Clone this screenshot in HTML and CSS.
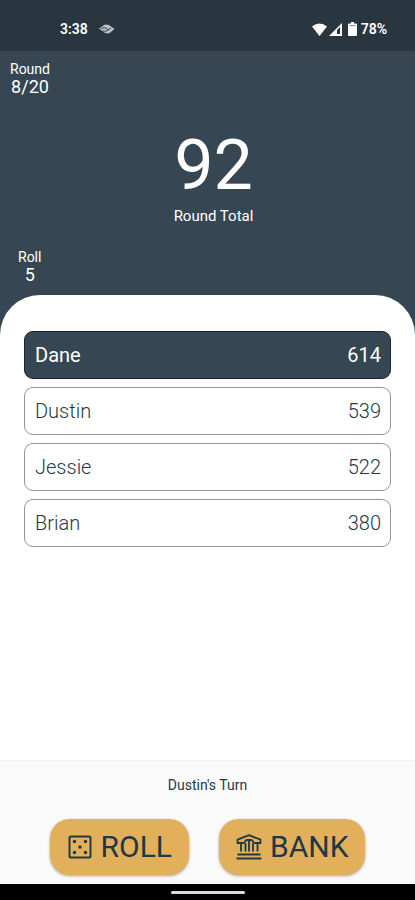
FILE: index.html
```html
<!DOCTYPE html>
<html lang="en">
<head>
<meta charset="utf-8">
<meta name="viewport" content="width=device-width, initial-scale=1">
<title>Bank</title>
<link rel="stylesheet" href="styles.css">
</head>
<body>
<div class="status-bar">
  <div class="status-group">
    <time>3:38</time>
    <svg class="cast-icon" width="16" height="10" viewBox="0 0 16 10" aria-hidden="true">
      <path d="M0 4.500L6 .500L10 1L15.500 5L10 9.500L6 9Z" fill="#b8c1c5"/>
      <path d="M2 4.500C6 3 8 4 9 6L12 4M4 7C6 7.500 8 7 9 6" fill="none" stroke="#2a363f" stroke-width="1"/>
    </svg>
  </div>
  <div class="status-group status-icons">
    <svg width="15" height="13" viewBox="0 0 15 13" aria-hidden="true"><path d="M0 3.500Q7.500-2.500 15 3.500L7.500 13Z" fill="#fff"/></svg>
    <svg width="13" height="13" viewBox="0 0 13 13" aria-hidden="true"><path d="M0 13L13 0V13Z" fill="#fff"/><path d="M8 7L11 4V11H8Z" fill="#2a363f"/></svg>
    <svg class="battery-icon" width="9" height="14" viewBox="0 0 9 14" aria-hidden="true"><path d="M3 0H6V1.500H8Q9 1.500 9 2.500V13Q9 14 8 14H1Q0 14 0 13V2.500Q0 1.500 1 1.500H3Z" fill="#fff"/><path d="M1.500 3.500H7.500" stroke="#7d878d"/></svg>
    <span>78%</span>
  </div>
</div>
<header class="summary">
  <div class="stat"><span class="label">Round</span><span class="stat-value">8/20</span></div>
  <div class="total"><span class="total-value">92</span><span class="total-label">Round Total</span></div>
  <div class="stat stat-roll"><span class="label">Roll</span><span class="stat-value">5</span></div>
</header>
<main class="sheet-wrap">
  <ol class="players">
    <li class="player active"><span>Dane</span><span>614</span></li>
    <li class="player"><span>Dustin</span><span>539</span></li>
    <li class="player"><span>Jessie</span><span>522</span></li>
    <li class="player"><span>Brian</span><span>380</span></li>
  </ol>
</main>
<footer class="turn">
  <p class="turn-name">Dustin's Turn</p>
  <div class="actions">
    <button class="action" type="button">
      <svg width="26" height="26" viewBox="-1 -1 26 26" aria-hidden="true">
        <rect x="1.500" y="1.500" width="21" height="21" rx="1.500" fill="none" stroke="currentColor" stroke-width="2"/>
        <g fill="currentColor"><circle cx="6.500" cy="6.500" r="1.700"/><circle cx="17.500" cy="6.500" r="1.700"/><circle cx="12" cy="12" r="1.700"/><circle cx="6.500" cy="17.500" r="1.700"/><circle cx="17.500" cy="17.500" r="1.700"/></g>
      </svg>
      <span>ROLL</span>
    </button>
    <button class="action" type="button">
      <svg width="26" height="26" viewBox="0 0 26 26" aria-hidden="true">
        <path d="M1.500 9V5.700L13 1.200L24.500 5.700V9H19Q17.500 9 17 7.500L15.500 6H10.500L9 7.500Q8.500 9 7 9Z" fill="none" stroke="currentColor" stroke-width="1.800" stroke-linejoin="round"/>
        <path d="M5 9V17.500M9.500 9V17.500M13 6V17.500M17 9V17.500M21.500 9V17.500" stroke="currentColor" stroke-width="1.800"/>
        <path d="M1.500 20.500H24.500M.5 24.500H25.500" stroke="currentColor" stroke-width="2"/>
      </svg>
      <span>BANK</span>
    </button>
  </div>
</footer>
<div class="nav-bar"><span class="nav-handle"></span></div>
</body>
</html>
```
FILE: styles.css
```css
* { box-sizing: border-box; }

body {
  margin: 0;
  min-height: 100vh;
  display: flex;
  flex-direction: column;
  font-family: Roboto, "Liberation Sans", sans-serif;
  color: #263847;
  background: #fff;
}

.status-bar {
  display: flex;
  justify-content: space-between;
  align-items: center;
  padding: 7px 28px 0 60px;
  height: 51px;
  background: #2a363f;
  color: #fff;
  font-size: 14px;
  font-weight: 600;
}

.status-group { display: flex; align-items: center; gap: 11px; }
.status-icons { gap: 2px; }
.battery-icon { margin: 0 2px 0 4px; }

.summary {
  display: flex;
  flex-direction: column;
  align-items: flex-start;
  padding: 10px 10px 10px;
  background: #364753;
  color: #fff;
}

.label { font-size: 14px; line-height: 16px; }

.stat {
  display: flex;
  flex-direction: column;
  align-items: center;
}

.stat-value { font-size: 18px; line-height: 20px; }
.stat-roll { margin-left: 8px; }

.total {
  align-self: stretch;
  display: flex;
  flex-direction: column;
  align-items: center;
  margin: 26px 0 24px;
  padding-left: 12px;
}

.total-value { font-size: 70px; line-height: 84px; }
.total-label { font-size: 15px; line-height: 18px; }

.sheet-wrap {
  flex: 1;
  background: linear-gradient(#364753 40px, #fff 40px);
}

.players {
  display: flex;
  flex-direction: column;
  gap: 8px;
  margin: 0;
  padding: 36px 24px;
  list-style: none;
  background: #fff;
  border-radius: 40px 40px 0 0;
}

.player {
  display: flex;
  justify-content: space-between;
  align-items: center;
  height: 48px;
  padding: 0 9px 0 10px;
  border: 1px solid #92969c;
  border-radius: 9px;
  font-size: 20px;
  font-weight: 300;
}

.player.active {
  background: #364753;
  border-color: #10263b;
  color: #fff;
  font-weight: 400;
}

.turn {
  padding: 15px 16px 9px;
  background: #fafafa;
  border-top: 1px solid #f0f0f0;
}

.turn-name {
  margin: 0;
  text-align: center;
  font-size: 14px;
  line-height: 18px;
}

.actions {
  display: flex;
  justify-content: center;
  gap: 30px;
  margin-top: 25px;
}

.action {
  display: flex;
  align-items: center;
  gap: 8px;
  height: 56px;
  padding: 0 17px;
  border: 0;
  border-radius: 20px;
  background: #e2b05b;
  color: #203844;
  font: 400 30px/36px Roboto, "Liberation Sans", sans-serif;
  box-shadow: 0 1px 3px rgba(0, 0, 0, 0.35);
}

.nav-bar {
  display: flex;
  justify-content: center;
  align-items: center;
  height: 16px;
  background: #000;
}

.nav-handle {
  width: 74px;
  height: 3px;
  border-radius: 2px;
  background: #dcdcdc;
}
```
